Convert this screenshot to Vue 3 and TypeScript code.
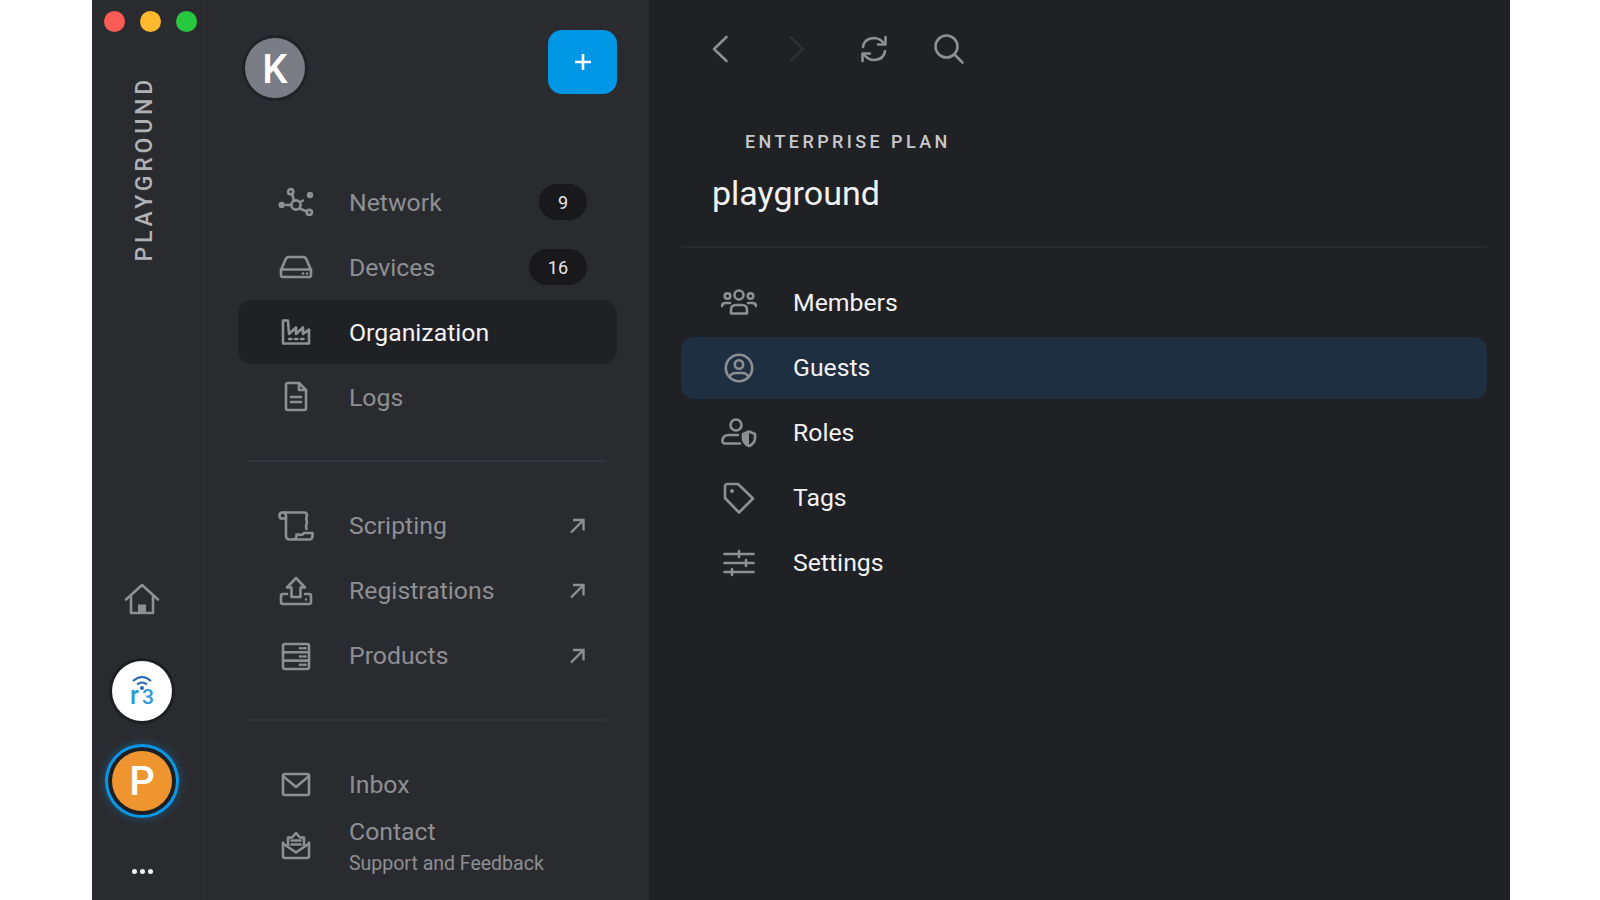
<script setup lang="ts">
interface NavItem {
  label: string
  icon: string
  badge?: string
  external?: boolean
  active?: boolean
}

// icon bodies, all drawn on a 36x36 box
const icons: Record<string, string> = {
  network:
    '<circle cx="18" cy="21" r="4.6"/><circle cx="12.7" cy="7.7" r="2.6"/><circle cx="31.3" cy="28.3" r="2.6"/><circle cx="32" cy="11" r="3.2" class="solid"/><circle cx="3.7" cy="21" r="3.2" class="solid"/><path d="M14 10l2 6.5M21.5 24.500l7.5 3M22.500 18l2.500-1.500M8 21h4"/>',
  devices:
    '<path d="M3 21L7.500 10.500Q8.500 8 11 8H25Q27.500 8 28.500 10.500L33 21V26Q33 28 31 28H5Q3 28 3 26Z"/><path d="M3 20.500H33"/><circle cx="25" cy="24.500" r="1.300" class="solid"/><circle cx="29" cy="24.500" r="1.300" class="solid"/>',
  organization:
    '<path d="M5 6.500H10L11 20L18 13.500V20L25 13.500V20L31 15.500V29.500H5Z"/><path d="M11 25h2.500M17 25h2.500M23 25h2.500"/>',
  logs:
    '<path d="M10 4H21L28 11V29Q28 31 26 31H10Q8 31 8 29V6Q8 4 10 4Z"/><path d="M21 4V11H28M13 18H23M13 23H23"/>',
  scripting:
    '<path d="M3.500 10.500Q1.500 10.500 1.500 7.500Q1.500 4.500 4.500 4.500H26Q29 4.500 29 7.500Q27.500 11 29 14Q27.500 18 28.500 21"/><path d="M3.500 10.500H8M5 4.500Q8 4.500 8 8V28Q8 31.500 12 31.500H31Q34.500 31.500 34.500 28V25H26Q24 28 21 26.500H18.500V28Q18.500 31.500 14 31.500"/>',
  registrations:
    '<path d="M18 5L9 14.500H13.500V24H22.500V14.500H27Z"/><path d="M9 21H5Q3 21 3 23V29Q3 31 5 31H31Q33 31 33 29V23Q33 21 31 21H27"/><circle cx="28" cy="26.500" r="1.200" class="solid"/>',
  products:
    '<rect x="5" y="6" width="26" height="25" rx="2"/><path d="M5 14.300H31M5 22.600H31"/><path d="M22 10.200h1.500M26 10.200h1.500M22 18.500h1.500M26 18.500h1.500M22 26.800h1.500M26 26.800h1.500"/>',
  inbox:
    '<rect x="5" y="8" width="26" height="21" rx="2"/><path d="M5.500 10.500L18 21L30.500 10.500"/>',
  contact:
    '<path d="M5 14.500V28Q5 30 7 30H29Q31 30 31 28V14.500"/><path d="M5 15.500L18 24.500L31 15.500"/><path d="M10 18.500V9.500H14L18 5L22 9.500H26V18.500M13.500 12.500H22.500M13.500 16.500H22.500"/>',
  back: '<path d="M24.500 6L12 18L24.500 30"/>',
  refresh:
    '<path d="M7 16Q8 7.500 18 7Q24 7 28 12.500"/><path d="M29.500 6V13.500H22"/><path d="M29 20Q28 28.500 18 29Q12 29 8 23.500"/><path d="M6.500 30V22.500H14"/>',
  search: '<circle cx="15.500" cy="15.500" r="11"/><path d="M23.500 23.500L31.500 31.500"/>',
  members:
    '<circle cx="18" cy="10" r="4.500"/><circle cx="6.500" cy="11" r="2.800"/><circle cx="29.500" cy="11" r="2.800"/><path d="M10 28.500V25Q10 20 15 20H21Q26 20 26 25V28.500Z"/><path d="M1 21Q1 18 5 18H9M35 21Q35 18 31 18H27"/>',
  guests:
    '<circle cx="18" cy="18" r="13.200"/><circle cx="18" cy="14.500" r="4.200"/><path d="M8.500 27Q10 23 15 23H21Q26 23 27.500 27"/>',
  roles:
    '<circle cx="15" cy="10" r="5.500"/><path d="M19 28.500H4Q1.500 28.500 1.500 26Q1.500 20 8 20H17"/><path d="M22 19L28 16.500L34 19V23Q34 28.500 28 31Q22 28.500 22 23Z"/><path d="M28 17V30.500L23 27V20Z" class="solid"/>',
  tags:
    '<path d="M4 6.500Q4 4 6.500 4H17L32 18.500L18 32.500L4 18Z"/><circle cx="11" cy="11" r="2" class="solid"/>',
  settings:
    '<path d="M3.500 9H32.500M3.500 18H32.500M3.500 27H32.500"/><path d="M18 6V12M25 15V21M11 24V30"/>'
}

const mainNav: NavItem[] = [
  { label: 'Network', icon: 'network', badge: '9' },
  { label: 'Devices', icon: 'devices', badge: '16' },
  { label: 'Organization', icon: 'organization', active: true },
  { label: 'Logs', icon: 'logs' }
]

const toolNav: NavItem[] = [
  { label: 'Scripting', icon: 'scripting', external: true },
  { label: 'Registrations', icon: 'registrations', external: true },
  { label: 'Products', icon: 'products', external: true }
]

const orgNav: NavItem[] = [
  { label: 'Members', icon: 'members' },
  { label: 'Guests', icon: 'guests', active: true },
  { label: 'Roles', icon: 'roles' },
  { label: 'Tags', icon: 'tags' },
  { label: 'Settings', icon: 'settings' }
]
</script>

<template>
  <div class="frame">
    <aside class="rail">
      <div class="lights">
        <span class="light red"></span>
        <span class="light yellow"></span>
        <span class="light green"></span>
      </div>
      <div class="rail-title">PLAYGROUND</div>
      <div class="rail-bottom">
        <svg class="icon home" viewBox="0 0 36 36">
          <path d="M2 18.500L18 4L34 18.500M7 14.500V32H29V14.500" />
          <path class="solid" d="M14 32V23.500H22V32Z" />
        </svg>
        <div class="r3-logo">
          <svg viewBox="0 0 60 60" width="60" height="60">
            <path class="wifi" d="M21 20Q30 12 39 20" />
            <path class="wifi" d="M25 23.500Q30 19.500 35 23.500" />
            <circle cx="30" cy="27" r="2" fill="#2468ad" />
            <text x="30" y="43" text-anchor="middle" class="r3-text"><tspan>r</tspan><tspan class="r3-digit" dx="3">3</tspan></text>
          </svg>
        </div>
        <div class="org-avatar"><span>P</span></div>
        <div class="dots"><i></i><i></i><i></i></div>
      </div>
    </aside>

    <nav class="sidebar">
      <header class="side-head">
        <div class="user-avatar">K</div>
        <button class="add-btn" type="button">
          <svg viewBox="0 0 16 16" width="16" height="16"><path d="M8 0V16M0 8H16" /></svg>
        </button>
      </header>

      <ul class="side-list">
        <li v-for="item in mainNav" :key="item.label" class="side-row" :class="{ active: item.active }">
          <svg class="icon" viewBox="0 0 36 36" v-html="icons[item.icon]"></svg>
          <span class="side-label">{{ item.label }}</span>
          <span v-if="item.badge" class="badge">{{ item.badge }}</span>
        </li>
      </ul>
      <hr class="side-rule" />
      <ul class="side-list">
        <li v-for="item in toolNav" :key="item.label" class="side-row">
          <svg class="icon" viewBox="0 0 36 36" v-html="icons[item.icon]"></svg>
          <span class="side-label">{{ item.label }}</span>
          <svg class="ext" viewBox="0 0 16 16" width="16" height="16"><path d="M2 14.500L14 2.500M4 2H14.500V12.500" /></svg>
        </li>
      </ul>
      <hr class="side-rule" />
      <ul class="side-list">
        <li class="side-row">
          <svg class="icon" viewBox="0 0 36 36" v-html="icons.inbox"></svg>
          <span class="side-label">Inbox</span>
        </li>
        <li class="side-row contact">
          <svg class="icon" viewBox="0 0 36 36" v-html="icons.contact"></svg>
          <div class="contact-text">
            <span class="side-label">Contact</span>
            <span class="side-sub">Support and Feedback</span>
          </div>
        </li>
      </ul>
    </nav>

    <main class="main">
      <div class="toolbar">
        <span class="tool"><svg class="icon" viewBox="0 0 36 36" v-html="icons.back"></svg></span>
        <span class="tool disabled"><svg class="icon flip" viewBox="0 0 36 36" v-html="icons.back"></svg></span>
        <span class="tool"><svg class="icon" viewBox="0 0 36 36" v-html="icons.refresh"></svg></span>
        <span class="tool last"><svg class="icon" viewBox="0 0 36 36" v-html="icons.search"></svg></span>
      </div>
      <div class="plan">ENTERPRISE PLAN</div>
      <h1 class="org-name">playground</h1>
      <hr class="main-rule" />
      <ul class="org-list">
        <li v-for="item in orgNav" :key="item.label" class="org-row" :class="{ active: item.active }">
          <svg class="icon" viewBox="0 0 36 36" v-html="icons[item.icon]"></svg>
          <span>{{ item.label }}</span>
        </li>
      </ul>
    </main>
  </div>
</template>

<style>
html,
body {
  background: #ffffff;
}
</style>

<style scoped>
.frame {
  display: flex;
  width: 1418px;
  height: 900px;
  margin-left: 92px;
  overflow: hidden;
  font-family: Roboto, "Liberation Sans", sans-serif;
  background: #202125;
}

ul {
  list-style: none;
  margin: 0;
  padding: 0;
}

.icon {
  flex: none;
  width: 36px;
  height: 36px;
  fill: none;
  stroke: #8e8f93;
  stroke-width: 2.6;
  stroke-linejoin: round;
  stroke-linecap: round;
}

.icon :deep(.solid),
.icon .solid {
  fill: #8e8f93;
  stroke: none;
}

.rail {
  flex: none;
  width: 113px;
  display: flex;
  flex-direction: column;
  align-items: center;
  padding-right: 12px;
  background: #2a2b2f;
  border-right: 1px solid #333438;
  box-sizing: border-box;
}

.lights {
  display: flex;
  gap: 15px;
  margin-top: 11px;
  margin-left: 16px;
}

.light {
  flex: none;
  width: 21px;
  height: 21px;
  border-radius: 50%;
}

.red { background: #fe5b57; }
.yellow { background: #ffb92e; }
.green { background: #27c840; }

.rail-title {
  margin-top: 44px;
  margin-left: 6px;
  writing-mode: vertical-rl;
  transform: rotate(180deg);
  color: #b0b1b4;
  font-size: 23px;
  font-weight: 500;
  letter-spacing: 3.800px;
  line-height: 28px;
}

.rail-bottom {
  margin-top: auto;
  display: flex;
  flex-direction: column;
  align-items: center;
}

.home {
  margin-bottom: 44px;
}

.r3-logo {
  width: 60px;
  height: 60px;
  border-radius: 50%;
  background: #ffffff;
  box-shadow: 0 0 0 3px #1e1f22;
}

.wifi {
  fill: none;
  stroke: #2468ad;
  stroke-width: 2;
}

.r3-text {
  fill: #2e9ad6;
  font-family: Roboto, sans-serif;
  font-size: 25px;
  font-weight: 500;
}

.r3-digit {
  font-size: 21px;
}

.org-avatar {
  margin-top: 30px;
  width: 60px;
  height: 60px;
  display: flex;
  align-items: center;
  justify-content: center;
  border-radius: 50%;
  background: #ee9530;
  color: #ffffff;
  font-size: 40px;
  font-weight: 500;
  box-shadow: 0 0 0 4px #1e1f22, 0 0 0 7px #0a97e8, 0 0 10px 8px rgba(10, 151, 232, 0.35);
}

.dots {
  display: flex;
  gap: 3px;
  margin-top: 58px;
  margin-bottom: 26px;
}

.dots i {
  width: 5px;
  height: 5px;
  border-radius: 50%;
  background: #f2f2f2;
}

.sidebar {
  flex: none;
  width: 444px;
  box-sizing: border-box;
  padding: 30px 32px 0 33px;
  background: #2a2b2f;
}

.side-head {
  display: flex;
  justify-content: space-between;
  align-items: flex-start;
  height: 140px;
}

.user-avatar {
  width: 60px;
  height: 60px;
  margin: 8px 0 0 7px;
  padding-top: 2px;
  box-sizing: border-box;
  display: flex;
  align-items: center;
  justify-content: center;
  border-radius: 50%;
  background: #7b7d86;
  color: #ffffff;
  font-size: 40px;
  font-weight: 500;
  box-shadow: 0 0 0 3px #212226;
}

.add-btn {
  width: 69px;
  height: 64px;
  padding: 0;
  border: none;
  border-radius: 14px;
  background: #0096e6;
  display: flex;
  align-items: center;
  justify-content: center;
}

.add-btn path {
  stroke: #ffffff;
  stroke-width: 2.6;
  fill: none;
}

.side-list {
  display: flex;
  flex-direction: column;
  gap: 1px;
}

.side-row {
  height: 64px;
  display: flex;
  align-items: center;
  padding: 0 32px 0 40px;
  border-radius: 14px;
  color: #8e8f93;
}

.side-row.active {
  background: #202125;
  color: #f2f2f3;
}

.side-label {
  margin-left: 35px;
  font-size: 24.800px;
}

.badge {
  margin-left: auto;
  margin-right: -2px;
  height: 36px;
  padding: 0 19px;
  display: flex;
  align-items: center;
  justify-content: center;
  border-radius: 18px;
  background: #19191b;
  color: #e6e6e7;
  font-size: 18px;
}

.ext {
  margin-left: auto;
  fill: none;
  stroke: #8e8f93;
  stroke-width: 2.4;
}

.side-rule {
  height: 2px;
  margin: 31px 11px 31.500px 10px;
  border: none;
  background: #34353a;
}

.contact {
  height: 62px;
  margin-top: 1px;
}

.contact .icon {
  margin-bottom: 6px;
}

.contact-text {
  display: flex;
  flex-direction: column;
  margin-bottom: 6px;
}

.side-sub {
  margin-left: 35px;
  margin-top: 6px;
  font-size: 19.500px;
}

.main {
  flex: 1;
  min-width: 0;
  padding: 0 23px 0 32px;
}

.toolbar {
  display: flex;
  padding-top: 31px;
  height: 36px;
}

.tool {
  width: 77px;
  display: flex;
  justify-content: center;
}

.tool.last {
  margin-left: -2px;
}

.flip {
  transform: scaleX(-1);
}

.disabled .icon {
  stroke: #2f3034;
}

.plan {
  margin: 64px 0 0 64px;
  color: #c9c9cb;
  font-size: 18px;
  font-weight: 500;
  letter-spacing: 3.400px;
  line-height: 22px;
}

.org-name {
  margin: 19px 0 0 31px;
  color: #f2f2f3;
  font-size: 34px;
  font-weight: 400;
  line-height: 42px;
}

.main-rule {
  height: 2px;
  margin: 32px 0 23.500px;
  border: none;
  background: #2a2b2f;
}

.org-list {
  display: flex;
  flex-direction: column;
  gap: 3px;
}

.org-row {
  height: 62px;
  display: flex;
  align-items: center;
  padding-left: 40px;
  border-radius: 14px;
  color: #f2f2f3;
  font-size: 24.800px;
}

.org-row span {
  margin-left: 36px;
}

.org-row.active {
  background: #1f2f42;
}
</style>
